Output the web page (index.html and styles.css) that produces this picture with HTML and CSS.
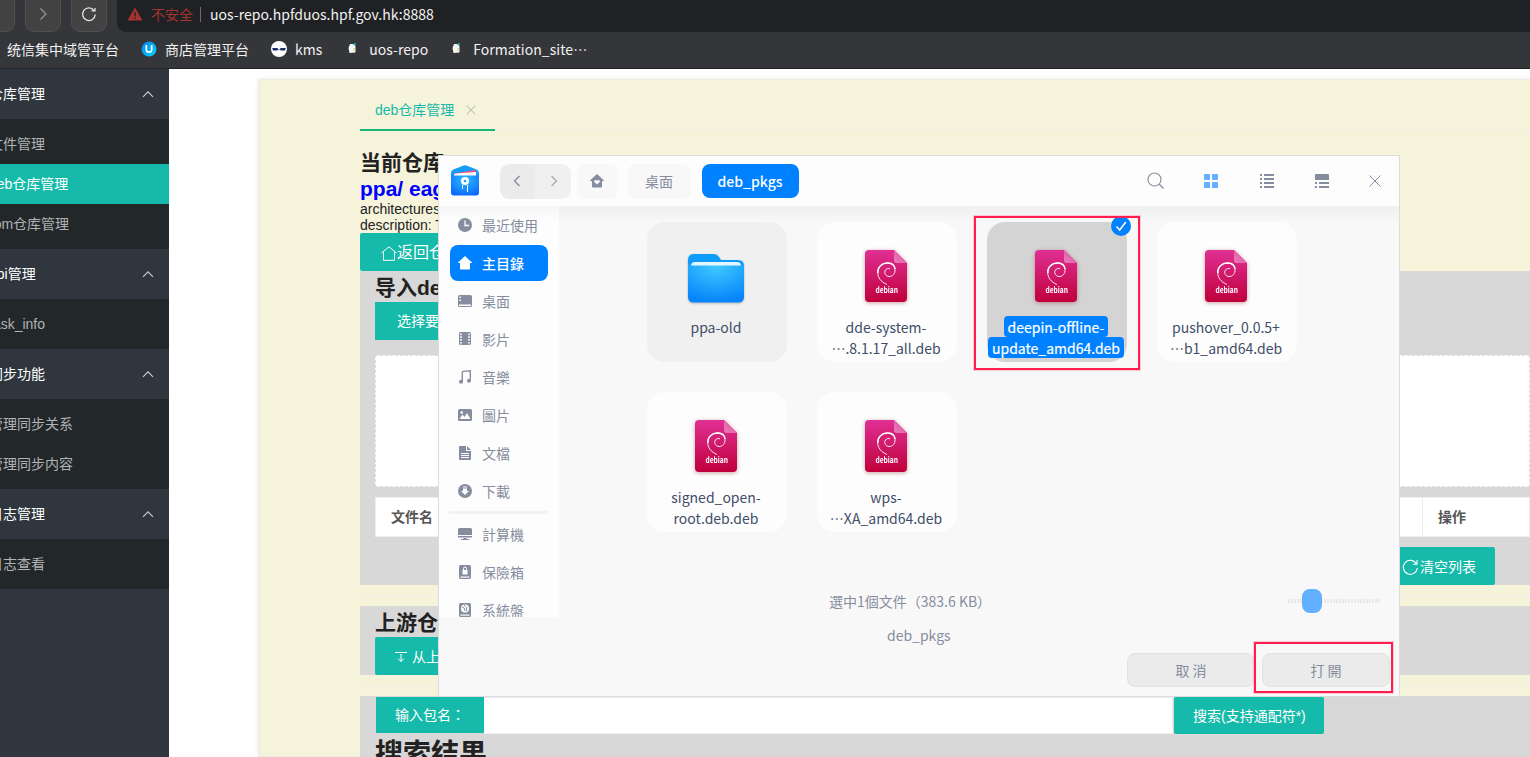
FILE: index.html
```
<!DOCTYPE html>
<html lang="zh-CN">
<head>
<meta charset="utf-8">
<title>deb仓库管理</title>
<link rel="stylesheet" href="styles.css">
</head>
<body>
<svg class="defs" width="0" height="0">
  <defs>
    <linearGradient id="debBg" x1="0" y1="0" x2="0" y2="1"><stop offset="0" stop-color="#e03094"/><stop offset="1" stop-color="#c0003c"/></linearGradient>
    <linearGradient id="debFold" x1="0" y1="1" x2="1" y2="0"><stop offset="0" stop-color="#ea7fba"/><stop offset="1" stop-color="#dc4a9c"/></linearGradient>
    <radialGradient id="folderBg" cx=".5" cy=".05" r=".95"><stop offset="0" stop-color="#41ccff"/><stop offset="1" stop-color="#0583fa"/></radialGradient>
    <radialGradient id="appBg" cx=".5" cy=".3" r=".8"><stop offset="0" stop-color="#2dbcff"/><stop offset="1" stop-color="#0a62fb"/></radialGradient>
    <linearGradient id="uBg" x1="0" y1="0" x2="1" y2="1"><stop offset="0" stop-color="#0a7dee"/><stop offset="1" stop-color="#00d8ff"/></linearGradient>
    <symbol id="deb" viewBox="0 0 42 52">
      <path d="M4 0H29L42 13V48a4 4 0 0 1-4 4H4a4 4 0 0 1-4-4V4a4 4 0 0 1 4-4z" fill="url(#debBg)"/>
      <path d="M29 0L42 13H32a3 3 0 0 1-3-3z" fill="url(#debFold)"/>
      <path d="M22 34.500C16 32 12.300 27.500 12.800 21.500C13.300 16 18 12.700 23 13C27.500 13.300 30.500 16.500 30 21C29.500 25 26 27.300 22.800 26.300C20 25.400 18.900 22.300 20.500 20C21.500 18.600 23.300 18.100 25 18.800" fill="none" stroke="#fff" stroke-width=".9"/>
      <path d="M12.900 23C12.300 17 17 12.800 23 13C27 13.200 29.700 15.500 30 19" fill="none" stroke="#fff" stroke-width="1.500"/>
      <text x="21.700" y="43.300" text-anchor="middle" class="deb-word" textLength="22.500" lengthAdjust="spacingAndGlyphs">debian</text>
    </symbol>
    <symbol id="up" viewBox="0 0 12 8"><path d="M1 6.800L6 1.800L11 6.800" fill="none" stroke="#cfd1d3" stroke-width="1.100"/></symbol>
    <symbol id="home" viewBox="0 0 14 14"><path d="M7 0L14 6.500V7H12V12.500a1 1 0 0 1-1 1H3a1 1 0 0 1-1-1V7H0V6.500z" fill="currentColor"/><path d="M7 10.500L4.400 7.900C3.700 7 4.400 5.800 5.500 5.900C6.200 6 6.700 6.400 7 6.900C7.300 6.400 7.800 6 8.500 5.900C9.600 5.800 10.300 7 9.600 7.900z" class="heart"/></symbol>
    <symbol id="site" viewBox="0 0 10 12"><path d="M3 2H7L8.500 4V10.500L2.500 11L1.500 6z" fill="#f5f5f5"/><path d="M6 2L9 1V2.500L7 3.500z" fill="#18bcbc"/><path d="M6.500 6H8V9H6.500z" fill="#e8d58c"/></symbol>
  </defs>
</svg>
<div class="screen">
  <header class="browser">
    <div class="toolbar">
      <div class="nav-btn first"></div>
      <div class="nav-btn"><svg width="16" height="16" viewBox="0 0 16 16"><path d="M5.500 2.500L11 8L5.500 13.500" fill="none" stroke="#98999b" stroke-width="1.100"/></svg></div>
      <div class="nav-btn"><svg width="16" height="16" viewBox="0 0 16 16"><path d="M13 4.500A6.300 6.300 0 1 0 14.200 8.500" fill="none" stroke="#e4e4e4" stroke-width="1.300"/><path d="M10.500 4.800H14V2" fill="none" stroke="#e4e4e4" stroke-width="1.300"/></svg></div>
      <div class="address">
        <svg width="16" height="14" viewBox="0 0 16 14"><path d="M8 .5L15.500 13.500H.5z" fill="#a5332f"/><path d="M7.300 5H8.700V9.300H7.300zM7.300 10.500H8.700V12H7.300z" fill="#202124"/></svg>
        <span class="insecure">不安全</span>
        <span class="url">uos-repo.hpfduos.hpf.gov.hk:8888</span>
      </div>
    </div>
    <nav class="bookmarks">
      <span class="bm b1">统信集中域管平台</span>
      <span class="bm b2"><svg width="16" height="16" viewBox="0 0 16 16"><circle cx="8" cy="8" r="7.500" fill="url(#uBg)"/><path d="M5.300 4V8.500a2.700 2.700 0 0 0 5.400 0V4" fill="none" stroke="#fff" stroke-width="1.700"/></svg>商店管理平台</span>
      <span class="bm b3"><svg width="16" height="16" viewBox="0 0 16 16"><circle cx="8" cy="8" r="8" fill="#fff"/><path d="M1.200 7H6.500L7 8.300H9L9.500 7H14.800L14 9.500H10L9 8.800H7L6 9.500H2z" fill="#1c2b6d"/></svg>kms</span>
      <span class="bm b4"><svg width="10" height="12"><use href="#site"/></svg>uos-repo</span>
      <span class="bm b5"><svg width="10" height="12"><use href="#site"/></svg>Formation_site⋯</span>
    </nav>
  </header>

  <div class="page">
    <aside class="side">
      <div class="group">仓库管理<svg width="12" height="8"><use href="#up"/></svg></div>
      <div class="sub"><a>文件管理</a><a class="on">deb仓库管理</a><a>rpm仓库管理</a></div>
      <div class="group">api管理<svg width="12" height="8"><use href="#up"/></svg></div>
      <div class="sub"><a>task_info</a></div>
      <div class="group">同步功能<svg width="12" height="8"><use href="#up"/></svg></div>
      <div class="sub"><a>管理同步关系</a><a>管理同步内容</a></div>
      <div class="group">日志管理<svg width="12" height="8"><use href="#up"/></svg></div>
      <div class="sub"><a>日志查看</a></div>
    </aside>
    <main class="content">
      <div class="tabs"><div class="tab">deb仓库管理<svg width="10" height="10" viewBox="0 0 10 10"><path d="M.7.7L9.300 9.300M9.300.7L.7 9.300" stroke="#c3c3b8" stroke-width="1.100"/></svg></div></div>
      <h2 class="repo">当前仓库</h2>
      <h2 class="repo link">ppa/ eagle</h2>
      <p class="meta">architectures: amd64</p>
      <p class="meta">description: Test</p>
      <button class="btn back"><svg width="16" height="15" viewBox="0 0 16 15"><path d="M.5 7L8 .8L15.500 7M2.500 6V14.300H13.500V6" fill="none" stroke="#fff"/></svg>返回仓库</button>
      <section class="block import">
        <h2>导入deb包</h2>
        <button class="btn choose">选择要上传</button>
        <div class="drop"></div>
        <div class="table"><span class="name">文件名</span><span class="act">操作</span></div>
        <div class="actions"><button class="btn clear"><svg width="17" height="16" viewBox="0 0 17 16"><path d="M14.500 5A7 7 0 1 0 15.300 9" fill="none" stroke="#fff" stroke-width="1.100"/><path d="M11 5.300H15V1" fill="none" stroke="#fff" stroke-width="1.100"/></svg>清空列表</button></div>
      </section>
      <hr>
      <section class="block upstream">
        <h2>上游仓库</h2>
        <button class="btn pull"><svg width="12" height="12" viewBox="0 0 12 12"><path d="M0 1.500H12M6 3V10.500M3 7.500L6 10.500L9 7.500" fill="none" stroke="#fff"/></svg>从上游同步</button>
      </section>
      <hr>
      <section class="block search">
        <div class="search-row"><label>输入包名<span class="colon" lang="zh-TW">：</span></label><div class="input"></div><button class="btn find">搜索(支持通配符*)</button></div>
        <h1>搜索结果</h1>
      </section>
    </main>
  </div>

  <div class="dialog">
    <div class="dlg-head">
      <svg class="app" width="28" height="31" viewBox="0 0 28 31"><path d="M0 8C0 6 1 5 3 4.200L12 .7Q14 0 16 .7L25 4.200Q28 5.500 28 8V20H0z" fill="#159cf8"/><path d="M3 8.500L23 5.200Q25 5 25 7V12H3z" fill="#fb4d70"/><path d="M3 10.500Q3 8.500 5 8.500L25 7V14H3z" fill="#fff"/><path d="M0 8Q0 10.500 3 10.500H25Q28 10.500 28 8V27.500Q28 30.500 25 30.500H3Q0 30.500 0 27.500z" fill="url(#appBg)"/><circle cx="14" cy="16" r="4" fill="#fff"/><circle cx="14" cy="16" r="1.300" fill="#2599ff"/><path d="M11.500 20V24M16.500 20V27" stroke="#fff"/></svg>
      <div class="history"><span><svg width="8" height="12" viewBox="0 0 8 12"><path d="M6.500 1L1.500 6L6.500 11" fill="none" stroke="#838a9a" stroke-width="1.300"/></svg></span><span><svg width="8" height="12" viewBox="0 0 8 12"><path d="M1.500 1L6.500 6L1.500 11" fill="none" stroke="#a6aab4" stroke-width="1.300"/></svg></span></div>
      <span class="crumb c-home"><svg width="14" height="14"><use href="#home"/></svg></span>
      <span class="crumb c-desk">桌面</span>
      <span class="crumb c-now">deb_pkgs</span>
      <div class="tools">
        <svg width="18" height="18" viewBox="0 0 18 18"><circle cx="7.500" cy="7.500" r="6.500" fill="none" stroke="#8b93a3" stroke-width="1.200"/><path d="M12.300 12.300L16.500 16.500" stroke="#8b93a3" stroke-width="1.500"/></svg>
        <svg width="14" height="14" viewBox="0 0 14 14" fill="#62b0ff"><rect width="6" height="6" rx=".8"/><rect x="8" width="6" height="6" rx=".8"/><rect y="8" width="6" height="6" rx=".8"/><rect x="8" y="8" width="6" height="6" rx=".8"/></svg>
        <svg width="14" height="14" viewBox="0 0 14 14" fill="#868d9e"><path d="M0 0h2v2H0zM4 0h10v2H4zM0 4h2v2H0zM4 4h10v2H4zM0 8h2v2H0zM4 8h10v2H4zM0 12h2v2H0zM4 12h10v2H4z"/></svg>
        <svg width="14" height="14" viewBox="0 0 14 14" fill="#868d9e"><path d="M1 0h12q1 0 1 1v5H0V1q0-1 1-1zM0 8h2v2H0zM4 8h10v2H4zM0 12h2v2H0zM4 12h10v2H4z"/></svg>
        <svg width="12" height="12" viewBox="0 0 12 12"><path d="M.5.5L11.500 11.500M11.500.5L.5 11.500" stroke="#868d9e" stroke-width="1"/></svg>
      </div>
    </div>
    <div class="dlg-body">
      <div class="places">
        <div class="place"><svg width="14" height="14" viewBox="0 0 14 14"><circle cx="7" cy="7" r="7" fill="currentColor"/><path d="M7 2.500V7.500H11" fill="none" stroke="#fff" stroke-width="1.300"/></svg>最近使用</div>
        <div class="place active"><svg width="14" height="14"><use href="#home"/></svg>主目錄</div>
        <div class="place"><svg width="14" height="14" viewBox="0 0 14 14"><rect y="1" width="14" height="12" rx="1.500" fill="currentColor"/><path d="M1 10.500H13V12H1zM1.500 2.500H3V4H1.500zM1.500 5.500H3V7H1.500z" fill="#fff"/></svg>桌面</div>
        <div class="place"><svg width="14" height="14" viewBox="0 0 14 14"><rect x="1" y="0" width="12" height="13" rx="1.500" fill="currentColor"/><path d="M3 1.500V13M11 1.500V13" stroke="#fff" stroke-width="1.600" stroke-dasharray="1.700 1.100"/></svg>影片</div>
        <div class="place"><svg width="14" height="14" viewBox="0 0 14 14"><path d="M4.300 11.500V2.300Q4.300 1.500 5.300 1.400L12.300.8V10.500" fill="none" stroke="currentColor" stroke-width="1.400"/><circle cx="3" cy="11.700" r="2" fill="currentColor"/><circle cx="11" cy="10.700" r="2" fill="currentColor"/></svg>音樂</div>
        <div class="place"><svg width="14" height="14" viewBox="0 0 14 14"><rect y="1" width="14" height="12" rx="1.500" fill="currentColor"/><circle cx="3.700" cy="4.500" r="1.300" fill="#fff"/><path d="M1.500 11L4.500 6.500L6.500 9L9 5L12.500 11z" fill="#fff"/></svg>圖片</div>
        <div class="place"><svg width="14" height="14" viewBox="0 0 14 14"><path d="M2 0H8V5H13V13q0 1-1 1H2q-1 0-1-1V1q0-1 1-1z" fill="currentColor"/><path d="M9 0L13 4H9z" fill="currentColor"/><path d="M3 7.500H11M3 9.500H11M3 11.500H11" stroke="#fff"/></svg>文檔</div>
        <div class="place"><svg width="14" height="14" viewBox="0 0 14 14"><circle cx="7" cy="7" r="7" fill="currentColor"/><path d="M5 2.500H9V3.500H5zM5 4.500H9V7H11L7 11L3 7H5z" fill="#fff"/></svg>下載</div>
        <div class="divider"></div>
        <div class="place"><svg width="14" height="14" viewBox="0 0 14 14"><path d="M1.500 1h11q1.500 0 1.500 1.500V8H0V2.500Q0 1 1.500 1zM0 9H14V10.500H0zM5.500 11H8.500V12H11V13H3V12H5.500z" fill="currentColor"/></svg>計算機</div>
        <div class="place"><svg width="14" height="14" viewBox="0 0 14 14"><rect x="1" width="12" height="14" rx="1.500" fill="currentColor"/><path d="M2.500 11.500H11.500V12.700H2.500z" fill="#fff"/><path d="M4.500 5H9.500V9.500H4.500z" fill="#fff"/><path d="M5.500 5V3.500a1.500 1.500 0 0 1 3 0V5" fill="none" stroke="#fff"/></svg>保險箱</div>
        <div class="place"><svg width="14" height="14" viewBox="0 0 14 14"><rect x="1" width="12" height="14" rx="1.500" fill="currentColor"/><path d="M2.500 11.500H11.500V12.700H2.500z" fill="#fff"/><circle cx="7" cy="5.500" r="4" fill="#fff"/><path d="M4 4Q7 4 7 8M6 2Q10 4 8.500 8" fill="none" stroke="currentColor"/></svg>系統盤</div>
      </div>
      <div class="files">
        <div class="card dir"><svg width="56" height="52" viewBox="0 0 56 52"><path d="M6 0H26Q29 0 31 3L33 6H50Q56 6 56 12V30H0V6Q0 0 6 0z" fill="#0d9cfc"/><path d="M3 12Q3 8 7 8H49Q53 8 53 12V20H3z" fill="#e3f6ff"/><path d="M0 9Q1 11.500 4 11.500H52Q55 11.500 56 10V43Q56 48.500 50 48.500H6Q0 48.500 0 43z" fill="url(#folderBg)"/></svg><p>ppa-old</p></div>
        <div class="card"><svg width="42" height="52"><use href="#deb"/></svg><p>dde-system-<br>⋯.8.1.17_all.deb</p></div>
        <div class="card picked"><svg width="42" height="52"><use href="#deb"/></svg><p><mark>deepin-offline-</mark><mark>update_amd64.deb</mark></p><i class="tick"><svg width="20" height="20" viewBox="0 0 20 20"><circle cx="10" cy="10" r="10" fill="#0081ff"/><path d="M5.500 10.500L8.700 14L14.800 6" fill="none" stroke="#fff" stroke-width="1.500"/></svg></i></div>
        <div class="card"><svg width="42" height="52"><use href="#deb"/></svg><p>pushover_0.0.5+<br>⋯b1_amd64.deb</p></div>
        <div class="card"><svg width="42" height="52"><use href="#deb"/></svg><p>signed_open-<br>root.deb.deb</p></div>
        <div class="card"><svg width="42" height="52"><use href="#deb"/></svg><p>wps-<br>⋯XA_amd64.deb</p></div>
      </div>
    </div>
    <div class="status"><span>選中1個文件（383.6 KB）</span><div class="slider"><i></i></div></div>
    <div class="folder-name">deb_pkgs</div>
    <div class="dlg-foot"><button>取 消</button><button>打 開</button></div>
    <div class="highlight hl-file"></div>
    <div class="highlight hl-open"></div>
  </div>
</div>
</body>
</html>
```
FILE: styles.css
```
* { box-sizing: border-box; }
body { margin: 0; font: 14px/20px "Liberation Sans", "Noto Sans CJK SC", sans-serif; color: #222; }
h1, h2, p { margin: 0; }
button { font: inherit; border: 0; padding: 0; }
svg { flex: none; display: block; }
.defs { position: absolute; }
.screen { position: relative; width: 1530px; height: 757px; overflow: hidden; background: #fff; }

/* browser chrome */
.browser { height: 69px; background: #35363a; border-bottom: 1px solid #242426; font-family: "Noto Sans CJK SC", sans-serif; color: #f1f1f1; }
.toolbar { height: 32px; display: flex; }
.nav-btn { width: 36px; height: 40px; margin: -8px 10px 0 0; border: 1px solid #505052; border-radius: 9px; background: #434344; display: flex; align-items: center; justify-content: center; padding-top: 4px; }
.nav-btn.first { width: 26px; margin-left: -11px; }
.address { flex: 1; height: 32px; background: #202124; border-radius: 0 0 0 9px; display: flex; align-items: center; padding: 0 0 4px 10px; }
.insecure { color: #a5332f; margin-left: 8px; padding-right: 7px; line-height: 15px; border-right: 1px solid #6b6c6e; }
.url { margin-left: 9px; letter-spacing: .02px; }
.bookmarks { height: 34px; display: flex; align-items: center; }
.bm { display: flex; align-items: center; gap: 8px; white-space: nowrap; }
.b1 { margin-left: 7px; }
.b2 { margin-left: 22px; }
.b3 { margin-left: 22px; }
.b4 { margin-left: 25px; gap: 12px; letter-spacing: .02px; }
.b5 { margin-left: 23px; gap: 12px; letter-spacing: .05px; }
.b4 svg, .b5 svg { margin-top: -2px; }

/* page */
.page { display: flex; height: 688px; }
.side { width: 169px; background: #2f363d; color: #fff; }
.group { height: 50px; display: flex; align-items: center; justify-content: space-between; padding-right: 15px; margin-left: -11px; white-space: nowrap; }
.sub { background: #22272a; padding: 5px 0; color: #b0b2b4; }
.sub a { display: block; height: 40px; line-height: 40px; text-indent: -11px; white-space: nowrap; }
.sub a.on { background: #16baaa; color: #fff; }
.content { margin: 10px 0 0 90px; flex: 1; background: #f5f4db; box-shadow: 0 1px 5px rgba(0,0,0,.14); border: 1px solid #ececdf; border-right: 0; padding-left: 100px; }
.tabs { height: 52px; padding-top: 10px; background: linear-gradient(#eee, #eee) 0 50px / 100% 1px no-repeat; }
.tab { width: 135px; height: 41px; border-bottom: 2px solid #16b777; color: #16baaa; padding-left: 15px; display: flex; align-items: center; gap: 12px; }
.repo { font-size: 21px; line-height: 26px; margin-top: 18px; }
.repo.link { margin-top: 0; line-height: 26px; color: #00f; margin-bottom: -1px; }
.meta { line-height: 16px; }
.btn { background: #16baaa; color: #fff; height: 38px; border-radius: 2px; display: flex; align-items: center; white-space: nowrap; }
.back { font-size: 16px; width: 150px; padding: 2px 0 0 21px; }
.block { background: #d8d8d8; padding-left: 15px; }
.block h2 { font-size: 21px; line-height: 33px; height: 31px; }
.import { height: 314px; }
.choose { width: 150px; padding-left: 22px; border-radius: 0; }
.drop { height: 132px; margin-top: 15px; background: #fff; border: 1px dashed #ddd; }
.table { margin-top: 10px; height: 40px; background: #fff; border: 1px solid #eee; display: flex; font-weight: bold; color: #555; align-items: stretch; line-height: 38px; }
.name { width: 1047px; padding-left: 15px; border-right: 1px solid #eee; }
.act { padding-left: 15px; }
.actions { display: flex; margin-top: 10px; padding-left: 1005px; }
.clear { width: 115px; padding: 2px 0 0 22px; gap: 1px; }
hr { border: 0; height: 1px; background: #eee; margin: 10px 0; }
.upstream { height: 69px; }
.pull { width: 160px; padding: 2px 0 0 20px; gap: 5px; }
.search { height: 80px; }
.search-row { display: flex; height: 38px; padding: 1px 0 0 1px; }
.search-row label { width: 108px; height: 36px; background: #16baaa; color: #fff; padding-left: 19px; line-height: 36px; }
.colon { font-family: "Noto Sans CJK TC", sans-serif; line-height: 20px; }
.input { width: 689px; height: 37px; background: #fff; border: 1px solid #eee; border-left: 0; margin-right: 1px; }
.find { width: 150px; height: 37px; padding-left: 19px; }
.search h1 { font-size: 28px; line-height: 42px; }

/* file chooser */
.dialog { position: absolute; left: 438px; top: 155px; width: 962px; height: 542px; border: 1px solid #dcdcdc; background: #f8f8f8; font-family: "Noto Sans CJK TC", "Noto Sans CJK SC", sans-serif; color: #414d68; }
.dlg-head { height: 50px; background: #fdfdfd; display: flex; align-items: center; padding-left: 12px; color: #868d9e; }
.app { margin-top: -2px; }
.history { display: flex; width: 71px; height: 35px; margin-left: 21px; border-radius: 9px; background: linear-gradient(90deg, #ebebeb 50%, #f0f0f0 50%); }
.history span { flex: 1; display: flex; align-items: center; justify-content: center; }
.history span + span { padding-left: 2px; }
.crumb { height: 35px; display: flex; align-items: center; justify-content: center; border-radius: 8px; background: #f8f8f8; }
.heart { fill: #fff; }
.c-home { width: 41px; margin-left: 6px; padding-right: 2px; }
.c-desk { width: 63px; margin-left: 10px; padding-right: 1px; }
.c-now { width: 97px; height: 34px; margin-left: 11px; background: #0081ff; color: #fff; font-weight: 500; padding-right: 1px; }
.tools { flex: 1; display: flex; align-items: center; padding-left: 348px; gap: 41px; }
.tools svg:nth-child(2) { margin-left: -2px; }
.tools svg:nth-child(3) { margin-left: 1px; }
.tools svg:nth-child(5) { margin-left: -1px; }
.dlg-body { display: flex; height: 411px; background: linear-gradient(#efefef, #f8f8f8 16px); }
.places { width: 120px; height: 411px; overflow: hidden; background: linear-gradient(#f5f5f5, #fdfdfd 14px); padding: 1px 11px 0; color: #868d9e; }
.place { height: 36px; margin-bottom: 2px; border-radius: 8px; display: flex; align-items: center; gap: 10px; padding-left: 8px; white-space: nowrap; line-height: 19px; }
.place.active { background: #0081ff; color: #fff; font-weight: 500; }
.active .heart { fill: #0081ff; }
.divider { height: 3px; background: #f2f2f2; margin: 0 0 2px -1px; width: 99px; }
.files { display: grid; grid-template-columns: repeat(4, 140px); grid-auto-rows: 140px; gap: 30px; padding: 16px 0 0 88px; }
.card { position: relative; border-radius: 18px; background: #fdfdfd; display: flex; flex-direction: column; align-items: center; padding: 28px 2px 0 0; text-align: center; }
.card > svg { overflow: visible; filter: drop-shadow(0 1px 2px rgba(130,20,20,.4)); }
.card p { margin-top: 15px; line-height: 21px; font-size: 14px; white-space: nowrap; }
.card.dir { background: #f0f0f0; padding-top: 32px; }
.card.dir > svg { filter: drop-shadow(0 1px 1px rgba(0,0,0,.25)); }
.card.dir p { margin-top: 11px; }
.card.picked { background: #d4d4d4; }
.picked p { display: flex; flex-direction: column; align-items: center; margin-top: 14px; }
mark { background: #0081ff; color: #fff; padding: 0 4px; border-radius: 4px; height: 21px; line-height: 23px; -webkit-text-stroke: .2px #fff; }
.tick { position: absolute; left: 124px; top: -6px; }
.deb-word { font: 600 8px "Noto Sans CJK SC", sans-serif; fill: #fff; }
.status { height: 28px; margin-top: -30px; display: flex; align-items: center; padding-left: 390px; color: #868d9e; position: relative; }
.status span { width: 459px; }
.slider { width: 92px; height: 24px; display: flex; align-items: center; padding-left: 14px; background: repeating-linear-gradient(90deg, #e9e9e9 0 2px, transparent 2px 3px) 0 10px / 92px 4px no-repeat; }
.slider i { width: 20px; height: 24px; border-radius: 8px; background: #62b0ff; }
.folder-name { height: 38px; line-height: 41px; padding-left: 448px; color: #868d9e; }
.dlg-foot { display: flex; gap: 7px; padding-left: 688px; }
.dlg-foot button { width: 128px; height: 34px; border-radius: 8px; border: 1px solid #e2e2e2; background: #ebebeb; color: #868d9e; }
.highlight { position: absolute; border: 2px solid #ff1f4e; box-shadow: 0 0 0 1px rgba(255,31,78,.2); }
.hl-file { left: 535px; top: 60px; width: 166px; height: 154px; }
.hl-open { left: 815px; top: 486px; width: 139px; height: 51px; }
```
